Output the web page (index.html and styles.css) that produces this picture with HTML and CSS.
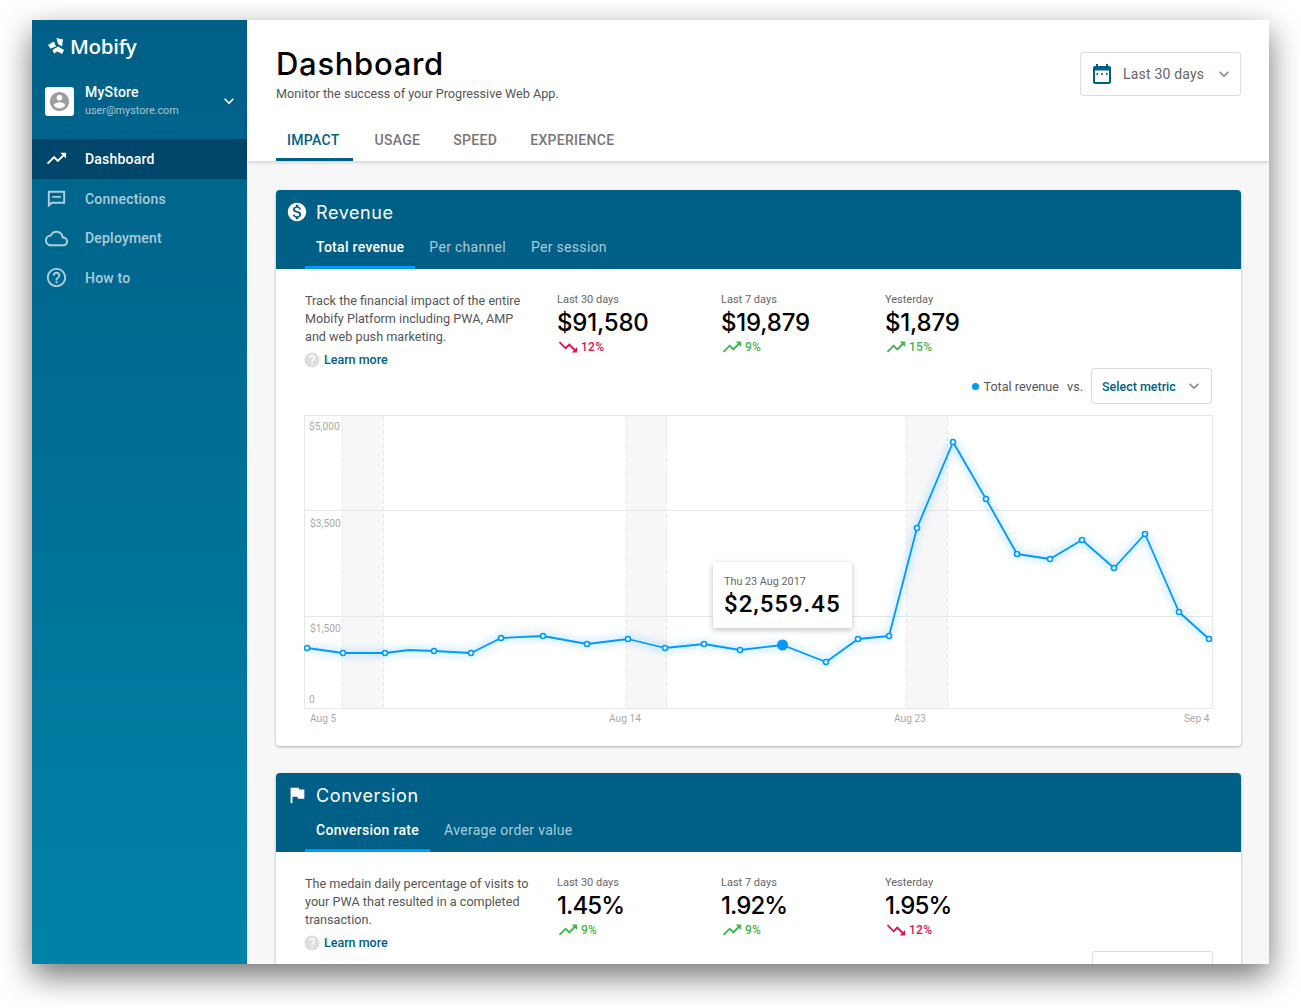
FILE: index.html
```html
<!DOCTYPE html>
<html lang="en">
<head>
  <meta charset="UTF-8" />
  <title>Dashboard - Mobify</title>
  <link rel="stylesheet" href="styles.css">
</head>
<body>

  <svg class="sprite" xmlns="http://www.w3.org/2000/svg">
    <symbol id="i-up" viewBox="0 0 24 24"><path d="M16 6l2.29 2.29-4.88 4.88-4-4L2 16.59 3.41 18l6-6 4 4 6.3-6.29L22 12V6z"/></symbol>
    <symbol id="i-down" viewBox="0 0 24 24"><path d="M16 18l2.29-2.29-4.88-4.88-4 4L2 7.41 3.41 6l6 6 4-4 6.3 6.29L22 12v6z"/></symbol>
    <symbol id="i-more" viewBox="0 0 24 24"><path d="M16.59 8.59L12 13.17 7.41 8.59 6 10l6 6 6-6z"/></symbol>
    <symbol id="i-help" viewBox="0 0 24 24"><path d="M12 2C6.48 2 2 6.48 2 12s4.48 10 10 10 10-4.48 10-10S17.52 2 12 2zm1 17h-2v-2h2v2zm2.07-7.75l-.9.92C13.45 12.9 13 13.5 13 15h-2v-.5c0-1.1.45-2.1 1.17-2.83l1.24-1.26c.37-.36.59-.86.59-1.41 0-1.1-.9-2-2-2s-2 .9-2 2H8c0-2.21 1.79-4 4-4s4 1.79 4 4c0 .88-.36 1.68-.93 2.25z"/></symbol>
  </svg>

  <div class="window">
    <!-- Sidebar -->
    <aside class="sidebar">
      <div class="logo">
        <svg class="logo-mark" viewBox="0 0 16 16"><path d="M8.5 0L15 1.500L14 8.500L10 6zM0 7L6 3.500L8 8.500L2.500 10.500zM4.500 12L10 8.500L16 12L14 16L9.500 13.500L6 15.500z"/></svg>
        <span>Mobify</span>
      </div>
      <div class="account">
        <div class="avatar">
          <svg viewBox="0 0 24 24"><path d="M12 2C6.48 2 2 6.48 2 12s4.48 10 10 10 10-4.48 10-10S17.52 2 12 2zm0 3c1.66 0 3 1.34 3 3s-1.34 3-3 3-3-1.34-3-3 1.34-3 3-3zm0 14.2c-2.5 0-4.71-1.28-6-3.22.03-1.99 4-3.08 6-3.08 1.99 0 5.97 1.09 6 3.08-1.29 1.94-3.5 3.22-6 3.22z"/></svg>
        </div>
        <div class="account-text">
          <div class="account-name">MyStore</div>
          <div class="account-mail">user@mystore.com</div>
        </div>
        <svg class="account-more"><use href="#i-more"/></svg>
      </div>
      <nav class="nav">
        <a class="nav-item active">
          <svg><use href="#i-up"/></svg>Dashboard
        </a>
        <a class="nav-item">
          <svg viewBox="0 0 24 24" fill-rule="evenodd"><path d="M21 4H3v17.500L7.500 17.500H21zM19 15.500H6.500L5 17V6h14zM7.500 9.500h9v1.800h-9z"/></svg>Connections
        </a>
        <a class="nav-item">
          <svg viewBox="0 0 24 24"><path d="M19.35 10.04C18.67 6.59 15.64 4 12 4 9.11 4 6.64 5.64 5.4 8.04 2.35 8.36 0 10.91 0 14c0 3.31 2.69 6 6 6h13c2.76 0 5-2.24 5-5 0-2.64-2.05-4.78-4.65-4.96zM19 18H6c-2.21 0-4-1.79-4-4s1.79-4 4-4h.71C7.37 7.69 9.48 6 12 6c3.04 0 5.5 2.46 5.5 5.5v.5H19c1.66 0 3 1.34 3 3s-1.34 3-3 3z"/></svg>Deployment
        </a>
        <a class="nav-item">
          <svg viewBox="0 0 24 24"><path d="M11 18h2v-2h-2v2zm1-16C6.48 2 2 6.48 2 12s4.48 10 10 10 10-4.48 10-10S17.52 2 12 2zm0 18c-4.41 0-8-3.59-8-8s3.59-8 8-8 8 3.59 8 8-3.59 8-8 8zm0-14c-2.21 0-4 1.79-4 4h2c0-1.1.9-2 2-2s2 .9 2 2c0 2-3 1.75-3 5h2c0-2.25 3-2.5 3-5 0-2.21-1.79-4-4-4z"/></svg>How to
        </a>
      </nav>
    </aside>

    <main class="main">
      <header class="page-header">
        <div class="page-top">
          <div>
            <h1>Dashboard</h1>
            <p class="page-sub">Monitor the success of your Progressive Web App.</p>
          </div>
          <div class="select date-select">
            <svg class="cal" viewBox="0 0 24 24" fill-rule="evenodd"><path d="M19 4h-1V2h-2v2H8V2H6v2H5c-1.1 0-2 .9-2 2v14c0 1.100.9 2 2 2h14c1.100 0 2-.9 2-2V6c0-1.100-.9-2-2-2zM19 20H5V8.500h14zM8 11H6.500v2H8zM12.800 11h-1.600v2h1.600zM17.500 11H16v2h1.500z"/></svg>
            <span>Last 30 days</span>
            <svg class="chev"><use href="#i-more"/></svg>
          </div>
        </div>
        <div class="page-tabs">
          <a class="page-tab active">Impact</a>
          <a class="page-tab">Usage</a>
          <a class="page-tab">Speed</a>
          <a class="page-tab">Experience</a>
        </div>
      </header>

      <div class="content">
        <!-- Revenue -->
        <section class="card">
          <div class="card-head">
            <h2>
              <svg viewBox="0 0 24 24"><path d="M12 2C6.48 2 2 6.48 2 12s4.48 10 10 10 10-4.48 10-10S17.52 2 12 2zm1.41 16.09V20h-2.67v-1.93c-1.71-.36-3.16-1.46-3.27-3.4h1.96c.1 1.05.82 1.87 2.65 1.87 1.96 0 2.4-.98 2.4-1.59 0-.83-.44-1.61-2.67-2.14-2.48-.6-4.18-1.62-4.18-3.67 0-1.72 1.39-2.84 3.11-3.21V4h2.67v1.95c1.86.45 2.79 1.86 2.85 3.39H14.3c-.05-1.11-.64-1.87-2.22-1.87-1.5 0-2.4.68-2.4 1.64 0 .84.65 1.39 2.67 1.91s4.18 1.39 4.18 3.91c-.01 1.83-1.38 2.83-3.12 3.16z"/></svg>
              Revenue
            </h2>
            <div class="card-tabs">
              <a class="card-tab active">Total revenue</a>
              <a class="card-tab">Per channel</a>
              <a class="card-tab">Per session</a>
            </div>
          </div>
          <div class="card-body">
            <div class="summary">
              <div class="about">
                <p>Track the financial impact of the entire Mobify Platform including PWA, AMP and web push marketing.</p>
                <a class="learn"><svg><use href="#i-help"/></svg>Learn more</a>
              </div>
              <div class="stat">
                <div class="stat-label">Last 30 days</div>
                <div class="stat-value">$91,580</div>
                <div class="delta bad"><svg><use href="#i-down"/></svg>12%</div>
              </div>
              <div class="stat">
                <div class="stat-label">Last 7 days</div>
                <div class="stat-value">$19,879</div>
                <div class="delta good"><svg><use href="#i-up"/></svg>9%</div>
              </div>
              <div class="stat">
                <div class="stat-label">Yesterday</div>
                <div class="stat-value">$1,879</div>
                <div class="delta good"><svg><use href="#i-up"/></svg>15%</div>
              </div>
            </div>

            <div class="metric-row">
              <span class="legend-dot"></span>
              <span class="legend">Total revenue</span>
              <span class="vs">vs.</span>
              <div class="select metric-select">
                <span>Select metric</span>
                <svg class="chev"><use href="#i-more"/></svg>
              </div>
            </div>

            <div class="chart">
              <svg class="chart-svg" width="909" height="315" viewBox="0 0 909 315">
                <defs>
                  <filter id="glow" x="-5%" y="-10%" width="110%" height="120%">
                    <feGaussianBlur stdDeviation="4"/>
                  </filter>
                </defs>
                <g class="bands">
                  <rect x="38" y="1" width="41.500" height="293"/>
                  <rect x="322" y="1" width="40.500" height="293"/>
                  <rect x="602" y="1" width="41.500" height="293"/>
                </g>
                <g class="dashes">
                  <path d="M38 1V294M79.500 1V294M322 1V294M362.500 1V294M602 1V294M643.500 1V294"/>
                </g>
                <g class="grid">
                  <rect x="0.5" y="0.5" width="908" height="293"/>
                  <path d="M1 95.5H908M1 201.5H908"/>
                </g>
                <g class="axis">
                  <text x="5" y="15">$5,000</text>
                  <text x="6" y="112">$3,500</text>
                  <text x="6" y="217">$1,500</text>
                  <text x="5" y="288">0</text>
                  <text x="6" y="307">Aug 5</text>
                  <text x="305" y="307">Aug 14</text>
                  <text x="590" y="307">Aug 23</text>
                  <text x="880" y="307">Sep 4</text>
                </g>
                <polyline class="line-glow" filter="url(#glow)" points="3,233 39,238 81,238 105,235 130,236 167,238 197,223 239,221 283,229 324,224 361,233 400,229 436,235 478.5,230 522,247 554,224 585,221 613,113 649,27 682,84 713,139 746,144 778,125 810,153 841,119 875,197 905,224"/>
                <polyline class="line" points="3,233 39,238 81,238 105,235 130,236 167,238 197,223 239,221 283,229 324,224 361,233 400,229 436,235 478.5,230 522,247 554,224 585,221 613,113 649,27 682,84 713,139 746,144 778,125 810,153 841,119 875,197 905,224"/>
                <g class="dots">
                  <circle cx="3" cy="233" r="2.5"/><circle cx="39" cy="238" r="2.5"/><circle cx="81" cy="238" r="2.5"/>
                  <circle cx="130" cy="236" r="2.5"/><circle cx="167" cy="238" r="2.5"/><circle cx="197" cy="223" r="2.5"/>
                  <circle cx="239" cy="221" r="2.5"/><circle cx="283" cy="229" r="2.5"/><circle cx="324" cy="224" r="2.5"/>
                  <circle cx="361" cy="233" r="2.5"/><circle cx="400" cy="229" r="2.5"/><circle cx="436" cy="235" r="2.5"/>
                  <circle cx="522" cy="247" r="2.5"/><circle cx="554" cy="224" r="2.5"/><circle cx="585" cy="221" r="2.5"/>
                  <circle cx="613" cy="113" r="2.5"/><circle cx="649" cy="27" r="2.5"/><circle cx="682" cy="84" r="2.5"/>
                  <circle cx="713" cy="139" r="2.5"/><circle cx="746" cy="144" r="2.5"/><circle cx="778" cy="125" r="2.5"/>
                  <circle cx="810" cy="153" r="2.5"/><circle cx="841" cy="119" r="2.5"/><circle cx="875" cy="197" r="2.5"/>
                  <circle cx="905" cy="224" r="2.5"/>
                </g>
                <circle class="dot-active" cx="478.5" cy="230" r="5.5"/>
              </svg>
              <div class="tooltip">
                <div class="tooltip-date">Thu 23 Aug 2017</div>
                <div class="tooltip-value">$2,559.45</div>
              </div>
            </div>
          </div>
        </section>

        <!-- Conversion -->
        <section class="card">
          <div class="card-head">
            <h2>
              <svg viewBox="0 0 24 24"><path d="M14.4 6L14 4H5v17h2v-7h5.6l.4 2h7V6z"/></svg>
              Conversion
            </h2>
            <div class="card-tabs">
              <a class="card-tab active">Conversion rate</a>
              <a class="card-tab">Average order value</a>
            </div>
          </div>
          <div class="card-body">
            <div class="summary">
              <div class="about">
                <p>The medain daily percentage of visits to your PWA that resulted in a completed transaction.</p>
                <a class="learn"><svg><use href="#i-help"/></svg>Learn more</a>
              </div>
              <div class="stat">
                <div class="stat-label">Last 30 days</div>
                <div class="stat-value pct">1.45%</div>
                <div class="delta good"><svg><use href="#i-up"/></svg>9%</div>
              </div>
              <div class="stat">
                <div class="stat-label">Last 7 days</div>
                <div class="stat-value pct">1.92%</div>
                <div class="delta good"><svg><use href="#i-up"/></svg>9%</div>
              </div>
              <div class="stat">
                <div class="stat-label">Yesterday</div>
                <div class="stat-value pct">1.95%</div>
                <div class="delta bad"><svg><use href="#i-down"/></svg>12%</div>
              </div>
            </div>
            <div class="metric-row">
              <div class="select metric-select next"></div>
            </div>
          </div>
        </section>
      </div>
    </main>
  </div>

</body>
</html>
```

FILE: styles.css
```css
* {
  box-sizing: border-box;
}

body {
  margin: 0;
  height: 1008px;
  padding: 20px 32px 0;
  overflow: hidden;
  background: #fff;
  font-family: Roboto, Arial, sans-serif;
  color: #555;
}

.sprite {
  display: none;
}

.window {
  display: flex;
  width: 1237px;
  height: 944px;
  overflow: hidden;
  box-shadow: 0 12px 30px rgba(0,0,0,0.55);
}

/* Sidebar */
.sidebar {
  width: 215px;
  flex: none;
  background: linear-gradient(180deg, #005f87 0%, #0082a8 100%);
  color: #fff;
}

.logo {
  display: flex;
  align-items: center;
  gap: 6px;
  height: 28px;
  margin: 12px 0 0 16px;
  font-family: "Open Sans", sans-serif;
  font-size: 20.5px;
  font-weight: 600;
  letter-spacing: -0.3px;
}

.logo-mark {
  width: 16px;
  height: 16px;
  fill: #fff;
}

.account {
  display: flex;
  align-items: center;
  height: 36px;
  margin: 23px 0 0 13px;
}

.avatar {
  width: 29px;
  height: 29px;
  background: #fff;
  border-radius: 3px;
  display: flex;
  align-items: center;
  justify-content: center;
}

.avatar svg {
  width: 23px;
  height: 23px;
  fill: #9e9e9e;
}

.account-text {
  margin-left: 11px;
  flex: 1;
}

.account-name {
  font-size: 14px;
  font-weight: 500;
  line-height: 19px;
  letter-spacing: 0.2px;
}

.account-mail {
  font-size: 10.8px;
  line-height: 18px;
  color: rgba(255,255,255,0.65);
}

.account-more {
  width: 20px;
  height: 20px;
  margin-right: 8px;
  fill: #fff;
}

.nav {
  margin-top: 20px;
}

.nav-item {
  display: flex;
  align-items: center;
  height: 39.5px;
  padding: 1px 0 0 13px;
  font-size: 14px;
  font-weight: 500;
  letter-spacing: 0.2px;
  color: rgba(255,255,255,0.68);
}

.nav-item svg {
  width: 23px;
  height: 23px;
  margin-right: 17px;
  fill: rgba(255,255,255,0.68);
}

.nav-item.active {
  padding-top: 0;
  background: #00466a;
  color: #fff;
}

.nav-item.active svg {
  fill: #fff;
}

/* Main */
.main {
  flex: 1;
  min-width: 0;
  background: #f7f7f7;
}

.page-header {
  height: 141px;
  padding: 0 28px 0 29px;
  background: #fff;
  box-shadow: 0 1px 4px rgba(0,0,0,0.2);
  position: relative;
}

.page-top {
  display: flex;
  justify-content: space-between;
  height: 100px;
  padding-top: 25px;
}

h1 {
  margin: 0;
  font-family: Inter, sans-serif;
  font-size: 31px;
  font-weight: 500;
  line-height: 38px;
  letter-spacing: 0.7px;
  color: #000;
}

.page-sub {
  margin: 2px 0 0;
  font-size: 12.65px;
  line-height: 18px;
  color: #555;
}

.select {
  display: flex;
  align-items: center;
  background: #fff;
  border: 1px solid #ddd;
  border-radius: 3px;
}

.chev {
  width: 20px;
  height: 20px;
  fill: #888;
}

.date-select {
  width: 161px;
  height: 44px;
  margin-top: 7px;
  padding: 0 6px 0 9px;
  font-size: 14px;
  letter-spacing: 0.2px;
  color: #666;
}

.date-select span {
  flex: 1;
  margin-left: 9px;
}

.cal {
  width: 24px;
  height: 24px;
  fill: #005f87;
}

.page-tabs {
  display: flex;
  gap: 11px;
}

.page-tab {
  height: 41px;
  padding: 0 11px;
  font-size: 14px;
  font-weight: 500;
  line-height: 40px;
  letter-spacing: 0.3px;
  text-transform: uppercase;
  color: #777;
}

.page-tab.active {
  color: #005f87;
  border-bottom: 3px solid #005f87;
  padding-right: 13px;
}

.content {
  padding: 29px 28px 0 29px;
}

.card {
  margin-bottom: 27px;
  background: #fff;
  border-radius: 4px;
  box-shadow: 0 1px 3px rgba(0,0,0,0.3);
  overflow: hidden;
}

.card-head {
  height: 79px;
  background: #005f87;
  color: #fff;
}

h2 {
  display: flex;
  align-items: center;
  height: 44px;
  margin: 0;
  padding-left: 10px;
  font-family: Inter, sans-serif;
  font-size: 18px;
  font-weight: 400;
  letter-spacing: 0.6px;
}

h2 svg {
  width: 22px;
  height: 22px;
  margin-right: 8px;
  fill: #fff;
}

.card-tabs {
  display: flex;
  padding-left: 29px;
}

.card-tab {
  height: 35px;
  padding: 0 11px;
  margin-right: 3px;
  font-size: 14px;
  font-weight: 400;
  line-height: 26px;
  letter-spacing: 0.3px;
  color: rgba(255,255,255,0.68);
}

.card-tab.active {
  font-weight: 500;
  color: #fff;
  border-bottom: 3px solid #0099ff;
}

.card-body {
  padding: 23px 29px 0 29px;
}

.summary {
  display: flex;
  height: 76px;
}

.about {
  width: 252px;
  font-size: 12.65px;
  line-height: 18px;
}

.about p {
  width: 226px;
  margin: 0;
}

.learn {
  display: flex;
  align-items: center;
  margin-top: 5px;
  font-weight: 500;
  font-size: 12.5px;
  color: #005f87;
}

.learn svg {
  width: 18px;
  height: 18px;
  margin: 0 3px 0 -2px;
  fill: #ddd;
}

.stat {
  width: 164px;
  padding-top: 1px;
}

.stat-label {
  font-size: 11px;
  line-height: 14px;
  color: #666;
}

.stat-value {
  margin-top: 1px;
  font-family: Inter, sans-serif;
  font-size: 24px;
  font-weight: 500;
  line-height: 29px;
  letter-spacing: -0.2px;
  color: #000;
}

.stat-value.pct {
  letter-spacing: -0.9px;
}

.delta {
  display: flex;
  align-items: center;
  margin-top: 2px;
  font-size: 12px;
  font-weight: 500;
  line-height: 16px;
  letter-spacing: 0.3px;
}

.delta svg {
  width: 22px;
  height: 22px;
  margin-right: 2px;
  margin-block: -3px;
}

.delta.good {
  color: #3fb54a;
  fill: #3fb54a;
}

.delta.bad {
  color: #e0134f;
  fill: #e0134f;
}

.metric-row {
  display: flex;
  align-items: center;
  justify-content: flex-end;
  height: 36px;
  font-size: 12.65px;
  color: #555;
}

.legend-dot {
  width: 7px;
  height: 7px;
  margin-right: 4px;
  border-radius: 50%;
  background: #0099ff;
}

.vs {
  margin: 0 8px;
}

.metric-select {
  width: 121px;
  height: 36px;
  padding: 0 7px 0 10px;
  color: #005f87;
  font-size: 12.5px;
  font-weight: 500;
}

.metric-select.next {
  margin-right: -1px;
}

.metric-select span {
  flex: 1;
}

/* Chart */
.chart {
  position: relative;
  width: 909px;
  height: 331px;
  margin-top: 11px;
  margin-left: -1px;
}

.chart-svg {
  display: block;
}

.bands rect {
  fill: #f7f7f7;
}

.dashes path {
  fill: none;
  stroke: #e6e6e6;
  stroke-dasharray: 4 3;
}

.grid rect,
.grid path {
  fill: none;
  stroke: #e8e8e8;
}

.axis text {
  font-family: Roboto, Arial, sans-serif;
  font-size: 10.2px;
  fill: #aaa;
}

.line,
.line-glow {
  fill: none;
  stroke: #0099ff;
  stroke-linejoin: round;
}

.line {
  stroke-width: 1.8;
}

.line-glow {
  stroke-width: 4;
  opacity: 0.35;
}

.dots circle {
  fill: #fff;
  stroke: #0099ff;
  stroke-width: 1.6;
}

.dot-active {
  fill: #0099ff;
}

.tooltip {
  position: absolute;
  left: 409px;
  top: 147px;
  width: 139px;
  height: 66px;
  padding: 13px 0 0 11px;
  background: #fff;
  box-shadow: 0 2px 6px rgba(0,0,0,0.25);
}

.tooltip-date {
  font-size: 10.8px;
  line-height: 14px;
  color: #666;
}

.tooltip-value {
  margin-top: 1px;
  font-size: 24px;
  font-weight: 500;
  line-height: 28px;
  letter-spacing: 1px;
  color: #000;
}
```
